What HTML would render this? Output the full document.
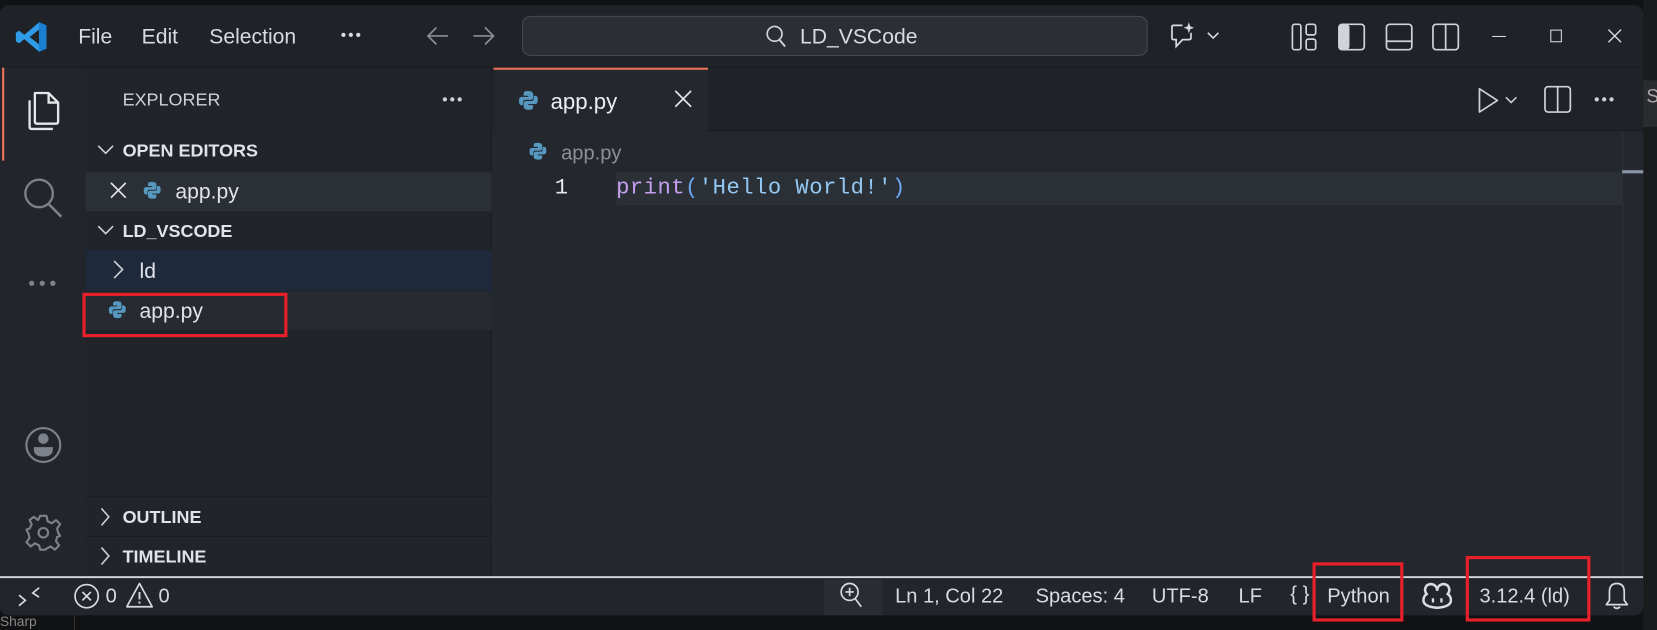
<!DOCTYPE html>
<html><head><meta charset="utf-8"><style>
*{box-sizing:border-box;margin:0;padding:0}
html,body{width:1657px;height:630px;overflow:hidden;background:#111213}
#w{position:absolute;left:0;top:0;width:1568px;height:596px;transform:scale(1.05676,1.05705);transform-origin:0 0;font-family:"Liberation Sans",sans-serif;color:#cfd3d8}
.a{position:absolute}
.t{position:absolute;white-space:nowrap;line-height:1}
svg{position:absolute;overflow:visible}
</style></head><body><div id="w">
<div class="a" style="left:1555px;top:0;width:13px;height:596px;background:#1a1b1d"></div>
<div class="a" style="left:1555px;top:76px;width:13px;height:44px;background:#2a2c2f"></div>
<div class="t" style="left:1558px;top:82px;font-size:18px;color:#aaa">S</div>
<div class="t" style="left:0;top:581px;font-size:13px;color:#888">Sharp</div>
<div class="a" style="left:70px;top:582px;width:1px;height:14px;background:#333"></div>
<div class="a" style="left:0;top:5px;width:1555px;height:577px;background:#23272d;border-radius:8px;overflow:hidden">
  <div class="a" style="left:0;top:0;width:1555px;height:59px;background:#1f2328;border-bottom:1px solid #181a1e"></div>
</div>
<svg style="left:15px;top:20px" width="30" height="30" viewBox="0 0 30 30"><path d="M22 1 L29 4 V26 L22 29 L8 17 L3 21 L0 19 V11 L3 9 L8 13 Z M22 8 L13 15 L22 22 Z" fill="#2f9ce8"/><path d="M22 1 L29 4 V26 L22 29 Z" fill="#1a7fd0"/></svg>
<div class="t" style="left:74px;top:25px;font-size:20px;color:#d8dbe0">File</div>
<div class="t" style="left:134px;top:25px;font-size:20px;color:#d8dbe0">Edit</div>
<div class="t" style="left:198px;top:25px;font-size:20px;color:#d8dbe0">Selection</div>
<svg style="left:322px;top:30px" width="20" height="6"><circle cx="3" cy="3" r="2" fill="#d8dbe0"/><circle cx="10" cy="3" r="2" fill="#d8dbe0"/><circle cx="17" cy="3" r="2" fill="#d8dbe0"/></svg>
<svg style="left:402px;top:24px" width="24" height="20"><path d="M22 10H3M11 2L3 10L11 18" stroke="#8a8f96" stroke-width="1.6" fill="none"/></svg>
<svg style="left:446px;top:24px" width="24" height="20"><path d="M2 10H21M13 2L21 10L13 18" stroke="#8a8f96" stroke-width="1.6" fill="none"/></svg>
<div class="a" style="left:494px;top:15px;width:592px;height:38px;border:1px solid #464a50;border-radius:8px;background:#2b2f34"></div>
<svg style="left:723px;top:23px" width="22" height="24"><circle cx="10" cy="9" r="7" stroke="#cfd3d8" stroke-width="1.6" fill="none"/><path d="M14 14L20 21" stroke="#cfd3d8" stroke-width="1.8"/></svg>
<div class="t" style="left:757px;top:25px;font-size:20px;color:#d8dbe0">LD_VSCode</div>
<svg style="left:1107px;top:20px" width="56" height="30"><path d="M12 4H3.5Q2 4 2 5.5V16Q2 17.5 3.5 17.5H6V24L12 17.5H18Q20 17.5 20 16V11" stroke="#d8dbe0" stroke-width="1.6" fill="none"/><path d="M18 1L19.3 5L23 6.3L19.3 7.6L18 11.5L16.7 7.6L13 6.3L16.7 5Z" fill="#d8dbe0"/><path d="M36 11L41 16L46 11" stroke="#d8dbe0" stroke-width="1.5" fill="none"/></svg>
<svg style="left:1222px;top:22px" width="26" height="26"><rect x="1" y="1" width="8" height="24" rx="2" stroke="#d0d3d8" stroke-width="1.6" fill="none"/><rect x="14" y="1" width="9" height="10" rx="2" stroke="#d0d3d8" stroke-width="1.6" fill="none"/><rect x="14" y="15" width="9" height="10" rx="2" stroke="#d0d3d8" stroke-width="1.6" fill="none"/></svg>
<svg style="left:1266px;top:22px" width="26" height="26"><rect x="1" y="1" width="24" height="24" rx="3" stroke="#d0d3d8" stroke-width="1.6" fill="none"/><rect x="1" y="1" width="10" height="24" rx="3" fill="#d0d3d8"/></svg>
<svg style="left:1311px;top:22px" width="26" height="26"><rect x="1" y="1" width="24" height="24" rx="3" stroke="#d0d3d8" stroke-width="1.6" fill="none"/><path d="M1 17H25" stroke="#d0d3d8" stroke-width="1.6"/></svg>
<svg style="left:1355px;top:22px" width="26" height="26"><rect x="1" y="1" width="24" height="24" rx="3" stroke="#d0d3d8" stroke-width="1.6" fill="none"/><path d="M13 1V25" stroke="#d0d3d8" stroke-width="1.6"/></svg>
<div class="a" style="left:1412px;top:34px;width:13px;height:1.3px;background:#d8dbe0"></div>
<div class="a" style="left:1467px;top:28px;width:11px;height:12px;border:1.3px solid #d8dbe0"></div>
<svg style="left:1521px;top:27px" width="14" height="14"><path d="M1 1L13 13M13 1L1 13" stroke="#d8dbe0" stroke-width="1.3"/></svg>

<div class="a" style="left:0;top:64px;width:80px;height:481px;background:#22262c"></div>
<div class="a" style="left:2px;top:64px;width:2px;height:88px;background:#e8735a"></div>
<svg style="left:22px;top:84px" width="38" height="44"><path d="M11 4H24L33 13V31Q33 33 31 33H13Q11 33 11 31Z" stroke="#e4e6ea" stroke-width="2.2" fill="none" stroke-linejoin="round"/><path d="M24 4V13H33" stroke="#e4e6ea" stroke-width="2.2" fill="none"/><path d="M6 11V36Q6 38 8 38H28" stroke="#e4e6ea" stroke-width="2.2" fill="none"/></svg>
<svg style="left:20px;top:166px" width="42" height="42"><circle cx="17" cy="17" r="13" stroke="#7d828a" stroke-width="2.2" fill="none"/><path d="M26 27L38 39" stroke="#7d828a" stroke-width="2.4"/></svg>
<svg style="left:27px;top:265px" width="26" height="6"><circle cx="3" cy="3" r="2.5" fill="#7d828a"/><circle cx="13" cy="3" r="2.5" fill="#7d828a"/><circle cx="23" cy="3" r="2.5" fill="#7d828a"/></svg>
<svg style="left:23px;top:403px" width="36" height="36"><circle cx="18" cy="18" r="16" stroke="#7d828a" stroke-width="2" fill="none"/><circle cx="18" cy="12" r="5" fill="#7d828a"/><path d="M9 20H27V22Q27 29 18 29Q9 29 9 22Z" fill="#7d828a"/></svg>
<svg style="left:22px;top:485px" width="38" height="38"><g transform="translate(19,19)" stroke="#7d828a" stroke-width="2" fill="none"><path d="M-3 -16H3L4 -11L8 -9L12 -12L16 -8L13 -4L14 0L16 3V3L13 4L12 8L15 12L11 16L7 13L3 15L2 16H-3L-4 12L-8 10L-12 13L-16 9L-13 5L-14 1L-16 -3L-13 -4L-11 -8L-13 -12L-9 -15L-5 -12Z" stroke-linejoin="round"/><circle r="4.5"/></g></svg>

<div class="a" style="left:80px;top:64px;width:385px;height:481px;background:#21252a;border-right:1px solid #1b1e22"></div>
<div class="t" style="left:116px;top:86px;font-size:17px;color:#cfd3d8">EXPLORER</div>
<svg style="left:418px;top:91px" width="20" height="6"><circle cx="3" cy="3" r="2" fill="#cfd3d8"/><circle cx="10" cy="3" r="2" fill="#cfd3d8"/><circle cx="17" cy="3" r="2" fill="#cfd3d8"/></svg>
<svg style="left:92px;top:136px" width="16" height="12"><path d="M1 2L8 9L15 2" stroke="#cfd3d8" stroke-width="1.5" fill="none"/></svg>
<div class="t" style="left:116px;top:134px;font-size:17px;font-weight:bold;color:#e0e3e7">OPEN EDITORS</div>
<div class="a" style="left:81px;top:163px;width:384px;height:37px;background:#2b2f36"></div>
<svg style="left:104px;top:172px" width="16" height="16"><path d="M1 1L15 15M15 1L1 15" stroke="#e0e3e7" stroke-width="1.6"/></svg>
<svg style="left:135px;top:171px" width="18" height="18" viewBox="0 0 18 18"><path d="M8.5 1C5 1 5 2.5 5 3.5V5H9V6H3Q1 6 1 9.5Q1 13 3 13H4.5V10.5Q4.5 8.5 6.5 8.5H11Q13 8.5 13 6.5V3.5Q13 1 8.5 1Z" fill="#5698c0"/><path d="M9.5 17C13 17 13 15.5 13 14.5V13H9V12H15Q17 12 17 8.5Q17 5 15 5H13.5V7.5Q13.5 9.5 11.5 9.5H7Q5 9.5 5 11.5V14.5Q5 17 9.5 17Z" fill="#5698c0"/></svg>
<div class="t" style="left:166px;top:172px;font-size:20px;color:#e0e3e7">app.py</div>
<svg style="left:92px;top:212px" width="16" height="12"><path d="M1 2L8 9L15 2" stroke="#cfd3d8" stroke-width="1.5" fill="none"/></svg>
<div class="t" style="left:116px;top:210px;font-size:17px;font-weight:bold;color:#e0e3e7">LD_VSCODE</div>
<div class="a" style="left:81px;top:237px;width:384px;height:38px;background:#1e2a3b"></div>
<svg style="left:106px;top:246px" width="12" height="18"><path d="M2 1L10 9L2 17" stroke="#cfd3d8" stroke-width="1.5" fill="none"/></svg>
<div class="t" style="left:132px;top:247px;font-size:20px;color:#e0e3e7">ld</div>
<div class="a" style="left:81px;top:276px;width:384px;height:36px;background:#272b31"></div>
<svg style="left:102px;top:284px" width="18" height="18" viewBox="0 0 18 18"><path d="M8.5 1C5 1 5 2.5 5 3.5V5H9V6H3Q1 6 1 9.5Q1 13 3 13H4.5V10.5Q4.5 8.5 6.5 8.5H11Q13 8.5 13 6.5V3.5Q13 1 8.5 1Z" fill="#5698c0"/><path d="M9.5 17C13 17 13 15.5 13 14.5V13H9V12H15Q17 12 17 8.5Q17 5 15 5H13.5V7.5Q13.5 9.5 11.5 9.5H7Q5 9.5 5 11.5V14.5Q5 17 9.5 17Z" fill="#5698c0"/></svg>
<div class="t" style="left:132px;top:285px;font-size:20px;color:#e0e3e7">app.py</div>
<div class="a" style="left:78px;top:277px;width:194px;height:42px;border:3px solid #e8202a"></div>
<div class="a" style="left:81px;top:469px;width:384px;height:1px;background:#191c20"></div>
<svg style="left:94px;top:480px" width="10" height="18"><path d="M2 1L9 9L2 17" stroke="#cfd3d8" stroke-width="1.5" fill="none"/></svg>
<div class="t" style="left:116px;top:481px;font-size:17px;font-weight:bold;color:#e0e3e7">OUTLINE</div>
<div class="a" style="left:81px;top:507px;width:384px;height:1px;background:#191c20"></div>
<svg style="left:94px;top:517px" width="10" height="18"><path d="M2 1L9 9L2 17" stroke="#cfd3d8" stroke-width="1.5" fill="none"/></svg>
<div class="t" style="left:116px;top:518px;font-size:17px;font-weight:bold;color:#e0e3e7">TIMELINE</div>

<div class="a" style="left:466px;top:64px;width:1089px;height:481px;background:#24282e"></div>
<div class="a" style="left:466px;top:64px;width:1089px;height:60px;background:#1f2328;border-bottom:1px solid #1a1d21"></div>
<div class="a" style="left:467px;top:64px;width:203px;height:61px;background:#24282e;border-top:2px solid #e8735a"></div>
<svg style="left:490px;top:85px" width="20" height="20" viewBox="0 0 18 18"><path d="M8.5 1C5 1 5 2.5 5 3.5V5H9V6H3Q1 6 1 9.5Q1 13 3 13H4.5V10.5Q4.5 8.5 6.5 8.5H11Q13 8.5 13 6.5V3.5Q13 1 8.5 1Z" fill="#5698c0"/><path d="M9.5 17C13 17 13 15.5 13 14.5V13H9V12H15Q17 12 17 8.5Q17 5 15 5H13.5V7.5Q13.5 9.5 11.5 9.5H7Q5 9.5 5 11.5V14.5Q5 17 9.5 17Z" fill="#5698c0"/></svg>
<div class="t" style="left:521px;top:86px;font-size:21px;color:#eceef1">app.py</div>
<svg style="left:638px;top:85px" width="17" height="17"><path d="M1 1L16 16M16 1L1 16" stroke="#e0e3e7" stroke-width="1.6"/></svg>
<svg style="left:1397px;top:82px" width="44" height="26"><path d="M3 2V24L20 13Z" stroke="#cfd3d8" stroke-width="1.6" fill="none" stroke-linejoin="round"/><path d="M28 10L33 15L38 10" stroke="#cfd3d8" stroke-width="1.5" fill="none"/></svg>
<svg style="left:1461px;top:81px" width="26" height="26"><rect x="1" y="1" width="24" height="24" rx="3" stroke="#cfd3d8" stroke-width="1.6" fill="none"/><path d="M13 1V25" stroke="#cfd3d8" stroke-width="1.6"/></svg>
<svg style="left:1508px;top:91px" width="20" height="6"><circle cx="3" cy="3" r="2" fill="#cfd3d8"/><circle cx="10" cy="3" r="2" fill="#cfd3d8"/><circle cx="17" cy="3" r="2" fill="#cfd3d8"/></svg>
<svg style="left:500px;top:134px" width="18" height="18" viewBox="0 0 18 18"><path d="M8.5 1C5 1 5 2.5 5 3.5V5H9V6H3Q1 6 1 9.5Q1 13 3 13H4.5V10.5Q4.5 8.5 6.5 8.5H11Q13 8.5 13 6.5V3.5Q13 1 8.5 1Z" fill="#5698c0"/><path d="M9.5 17C13 17 13 15.5 13 14.5V13H9V12H15Q17 12 17 8.5Q17 5 15 5H13.5V7.5Q13.5 9.5 11.5 9.5H7Q5 9.5 5 11.5V14.5Q5 17 9.5 17Z" fill="#5698c0"/></svg>
<div class="t" style="left:531px;top:136px;font-size:19px;color:#8c9198">app.py</div>
<div class="a" style="left:583px;top:163px;width:952px;height:31px;background:#2b2f36"></div>
<div class="a" style="left:1535px;top:125px;width:1px;height:420px;background:#2e3238"></div>
<div class="a" style="left:1535px;top:161px;width:20px;height:3px;background:#8a96a8"></div>
<div class="t" style="left:525px;top:168px;font-size:21px;font-family:'Liberation Mono',monospace;color:#e6e8eb">1</div>
<div class="t" style="left:583px;top:168px;font-size:21px;letter-spacing:0.45px;font-family:'Liberation Mono',monospace;color:#c5a0f0">print<span style="color:#6aa8f0">(</span><span style="color:#93c8f5">'Hello World!'</span><span style="color:#6aa8f0">)</span></div>

<div class="a" style="left:0;top:545px;width:1555px;height:37px;background:#22262c;border-top:2px solid #d7d9dc;border-radius:0 0 8px 8px"></div>
<svg style="left:16px;top:553px" width="24" height="22"><path d="M2 10L8 15L2 20M21 3L15 8L21 12" stroke="#d8dbe0" stroke-width="1.6" fill="none"/></svg>
<svg style="left:69px;top:551px" width="26" height="26"><circle cx="13" cy="13" r="11" stroke="#d8dbe0" stroke-width="1.6" fill="none"/><path d="M9 9L17 17M17 9L9 17" stroke="#d8dbe0" stroke-width="1.6"/></svg>
<div class="t" style="left:100px;top:555px;font-size:19px;color:#d8dbe0">0</div>
<svg style="left:118px;top:550px" width="28" height="26"><path d="M14 2L26 24H2Z" stroke="#d8dbe0" stroke-width="1.6" fill="none" stroke-linejoin="round"/><path d="M14 10V17M14 19V21" stroke="#d8dbe0" stroke-width="1.8"/></svg>
<div class="t" style="left:150px;top:555px;font-size:19px;color:#d8dbe0">0</div>
<div class="a" style="left:780px;top:547px;width:55px;height:35px;background:#292d33"></div>
<svg style="left:793px;top:550px" width="26" height="28"><circle cx="11" cy="10" r="8" stroke="#d8dbe0" stroke-width="1.6" fill="none"/><path d="M11 6V14M7 10H15M16 16L22 24" stroke="#d8dbe0" stroke-width="1.6"/></svg>
<div class="t" style="left:847px;top:555px;font-size:19px;color:#d8dbe0">Ln 1, Col 22</div>
<div class="t" style="left:980px;top:555px;font-size:19px;color:#d8dbe0">Spaces: 4</div>
<div class="t" style="left:1090px;top:555px;font-size:19px;color:#d8dbe0">UTF-8</div>
<div class="t" style="left:1172px;top:555px;font-size:19px;color:#d8dbe0">LF</div>
<div class="t" style="left:1221px;top:553px;font-size:19px;color:#d8dbe0">{ }</div>
<div class="t" style="left:1256px;top:555px;font-size:19px;color:#d8dbe0">Python</div>
<div class="a" style="left:1242px;top:532px;width:86px;height:56px;border:3px solid #e8202a"></div>
<svg style="left:1345px;top:550px" width="30" height="28"><path d="M5 4Q9 1 13 4Q15 6 15 9Q15 6 17 4Q21 1 25 4Q28 8 25 12Q28 14 28 18Q28 24 15 25Q2 24 2 18Q2 14 5 12Q2 8 5 4Z" stroke="#d8dbe0" stroke-width="2.4" fill="none"/><path d="M11 16V20M19 16V20" stroke="#d8dbe0" stroke-width="2.2"/></svg>
<div class="t" style="left:1400px;top:555px;font-size:19px;color:#d8dbe0">3.12.4 (ld)</div>
<div class="a" style="left:1387px;top:526px;width:118px;height:62px;border:3px solid #e8202a"></div>
<svg style="left:1518px;top:550px" width="24" height="28"><path d="M12 2Q19 2 19 10V18L22 22H2L5 18V10Q5 2 12 2Z" stroke="#d8dbe0" stroke-width="1.6" fill="none" stroke-linejoin="round"/><path d="M9 24Q12 27 15 24" stroke="#d8dbe0" stroke-width="1.6" fill="none"/></svg>
</div></body></html>
